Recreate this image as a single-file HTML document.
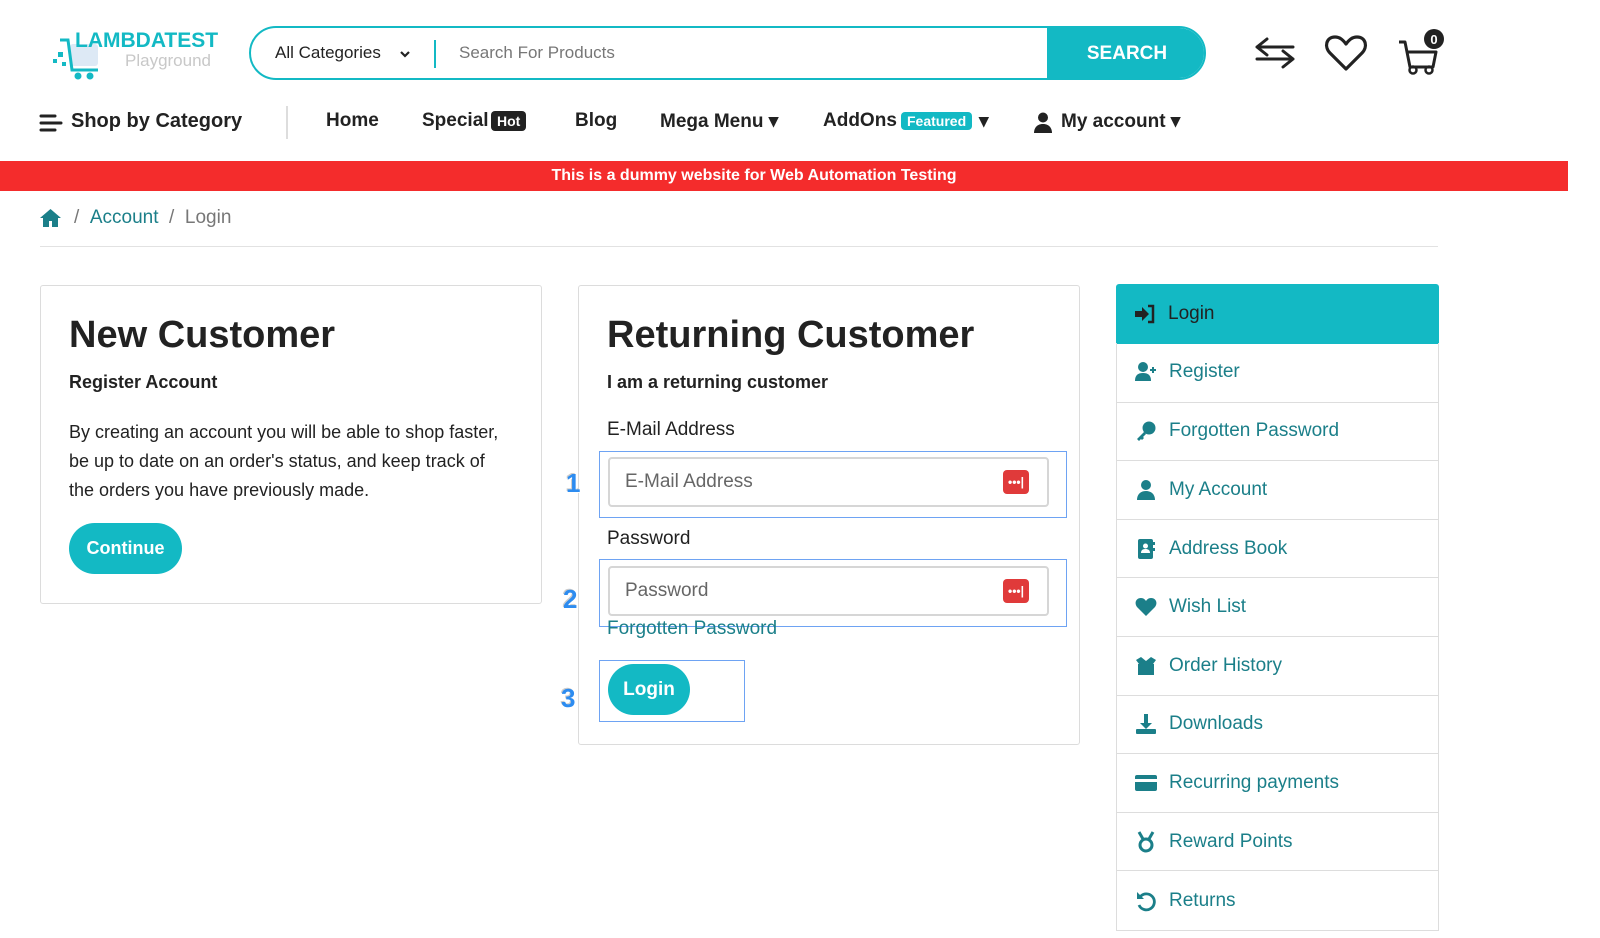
<!DOCTYPE html>
<html><head><meta charset="utf-8"><style>
*{box-sizing:border-box;margin:0;padding:0}
body{width:1600px;height:938px;overflow:hidden;background:#fff;font-family:"Liberation Sans",sans-serif;color:#222;position:relative}
.a{position:absolute}
.teal{color:#1b7f89}
.box{position:absolute;border:1px solid #dcdcdc;border-radius:3px;background:#fff}
.nav{position:absolute;top:110px;font-size:19px;font-weight:bold;color:#222}
.side{position:absolute;left:1116px;width:323px;border:1px solid #ddd;border-top:none}
.row{height:58.6px;border-top:1px solid #ddd;display:flex;align-items:center;padding-left:18px;font-size:19px;color:#1b7f89}
.row svg{width:22px;height:22px;margin-right:12px;fill:#1b7f89}
.inp{position:absolute;left:608px;width:441px;height:50px;border:2px solid #d6d6d6;border-radius:4px;font-size:19px;color:#666;padding:12px 15px}
.dots{position:absolute;right:18px;top:11px;width:26px;height:24px;background:#e03a3a;border-radius:4px;color:#fff;font-size:12px;line-height:24px;text-align:center;font-weight:bold}
.hl{position:absolute;border:1.5px solid #6ea3f3}
.num{position:absolute;font-size:26px;font-weight:bold;color:#2d8cf0;text-shadow:1px 1px 0 #fff,-1px -1px 0 #ccc}
</style></head><body>
<svg class="a" style="left:50px;top:28px" width="60" height="55" viewBox="0 0 60 55">
<rect x="20" y="16" width="28" height="22" rx="3" fill="#dde9f5"/>
<path d="M10 12h8l4 30h26" fill="none" stroke="#13b9c4" stroke-width="3"/>
<circle cx="28" cy="48" r="3.5" fill="#13b9c4"/><circle cx="40" cy="48" r="3.5" fill="#13b9c4"/>
<rect x="8" y="24" width="5" height="5" fill="#13b9c4"/><rect x="3" y="31" width="4" height="4" fill="#13b9c4"/><rect x="12" y="34" width="4" height="4" fill="#13b9c4"/>
</svg>
<div class="a" style="left:75px;top:29px;font-size:21px;font-weight:bold;color:#13b9c4">LAMBDATEST</div>
<div class="a" style="left:125px;top:51px;font-size:17px;color:#c8c8c8">Playground</div>
<div class="a" style="left:249px;top:26px;width:957px;height:54px;border:2px solid #13b9c4;border-radius:27px;overflow:hidden">
<div class="a" style="left:24px;top:15px;font-size:17px;color:#222">All Categories</div>
<svg class="a" style="left:148px;top:21px" width="12" height="10" viewBox="0 0 12 10"><path d="M2 3l4 4 4-4" fill="none" stroke="#222" stroke-width="2.2"/></svg>
<div class="a" style="left:183px;top:12px;width:2px;height:28px;background:#13b9c4"></div>
<div class="a" style="left:208px;top:15px;font-size:17px;color:#777">Search For Products</div>
<div class="a" style="left:796px;top:0;width:160px;height:52px;background:#13b9c4;color:#fff;font-weight:bold;font-size:19px;line-height:52px;text-align:center">SEARCH</div>
</div>
<svg class="a" style="left:1253px;top:35px" width="44" height="36" viewBox="0 0 44 36"><path d="M14 4L4 12l10 8M4 12h36M30 16l10 8-10 8M40 24H4" fill="none" stroke="#222" stroke-width="3" stroke-linecap="round" stroke-linejoin="round"/></svg>
<svg class="a" style="left:1324px;top:33px" width="44" height="40" viewBox="0 0 44 40"><path d="M22 36L6 20C0 14 2 4 11 4c5 0 8 3 11 7 3-4 6-7 11-7 9 0 11 10 5 16z" fill="none" stroke="#222" stroke-width="3.2" stroke-linejoin="round"/></svg>
<svg class="a" style="left:1396px;top:28px" width="50" height="48" viewBox="0 0 50 48"><path d="M3 14h6l5 25h23l3-15H12" fill="none" stroke="#222" stroke-width="3" stroke-linejoin="round"/><circle cx="17" cy="42" r="3.5" fill="none" stroke="#222" stroke-width="2.5"/><circle cx="33" cy="42" r="3.5" fill="none" stroke="#222" stroke-width="2.5"/><circle cx="38" cy="11" r="10" fill="#222"/><text x="38" y="16" font-size="13" font-weight="bold" fill="#fff" text-anchor="middle" font-family="Liberation Sans">0</text></svg>
<svg class="a" style="left:39px;top:113px" width="24" height="20" viewBox="0 0 24 20"><path d="M2 3h14M2 10h20M2 17h14" stroke="#222" stroke-width="3" stroke-linecap="round"/></svg>
<div class="nav" style="left:71px;font-size:20px">Shop by Category</div>
<div class="a" style="left:286px;top:106px;width:2px;height:33px;background:#ddd"></div>
<div class="nav" style="left:326px">Home</div>
<div class="nav" style="left:422px">Special</div>
<div class="a" style="left:491px;top:111px;background:#222;color:#fff;font-size:14px;font-weight:bold;padding:2px 6px;border-radius:4px">Hot</div>
<div class="nav" style="left:575px">Blog</div>
<div class="nav" style="left:660px">Mega Menu ▾</div>
<div class="nav" style="left:823px">AddOns</div>
<div class="a" style="left:901px;top:112px;background:#13b9c4;color:#fff;font-size:14px;font-weight:bold;padding:1px 6px;border-radius:4px">Featured</div>
<div class="nav" style="left:979px">▾</div>
<svg class="a" style="left:1034px;top:112px" width="18" height="21" viewBox="0 0 18 21"><circle cx="9" cy="5.5" r="5" fill="#222"/><path d="M0 21c0-6 4-9 9-9s9 3 9 9z" fill="#222"/></svg>
<div class="nav" style="left:1061px">My account ▾</div>
<div class="a" style="left:0;top:161px;width:1568px;height:30px;background:#f42c2c;color:#fff;font-weight:bold;font-size:16px;text-align:center;line-height:30px;padding-right:60px">This is a dummy website for Web Automation Testing</div>
<svg class="a" style="left:39px;top:208px" width="23" height="20" viewBox="0 0 23 20"><path d="M11.5 1L1 10h3v9h6v-6h3v6h6v-9h3z" fill="#1b7f89"/></svg>
<div class="a" style="left:74px;top:207px;font-size:19px;color:#777">/ <span class="teal">&nbsp;Account</span> &nbsp;/ &nbsp;Login</div>
<div class="a" style="left:40px;top:246px;width:1398px;height:1px;background:#e2e2e2"></div>
<div class="box" style="left:40px;top:285px;width:502px;height:319px"></div>
<div class="a" style="left:69px;top:314px;font-size:38px;font-weight:bold;color:#222">New Customer</div>
<div class="a" style="left:69px;top:372px;font-size:18px;font-weight:bold">Register Account</div>
<div class="a" style="left:69px;top:418px;width:440px;font-size:18px;line-height:29px">By creating an account you will be able to shop faster, be up to date on an order's status, and keep track of the orders you have previously made.</div>
<div class="a" style="left:69px;top:523px;width:113px;height:51px;background:#13b9c4;border-radius:26px;color:#fff;font-weight:bold;font-size:18px;line-height:51px;text-align:center">Continue</div>
<div class="box" style="left:578px;top:285px;width:502px;height:460px"></div>
<div class="a" style="left:607px;top:314px;font-size:38px;font-weight:bold;color:#222">Returning Customer</div>
<div class="a" style="left:607px;top:372px;font-size:18px;font-weight:bold">I am a returning customer</div>
<div class="a" style="left:607px;top:419px;font-size:19px">E-Mail Address</div>
<div class="hl" style="left:599px;top:451px;width:468px;height:67px"></div>
<div class="inp" style="top:457px">E-Mail Address<div class="dots">•••|</div></div>
<div class="a" style="left:607px;top:528px;font-size:19px">Password</div>
<div class="hl" style="left:599px;top:559px;width:468px;height:68px"></div>
<div class="inp" style="top:566px">Password<div class="dots">•••|</div></div>
<div class="a teal" style="left:607px;top:618px;font-size:19px">Forgotten Password</div>
<div class="hl" style="left:599px;top:660px;width:146px;height:62px"></div>
<div class="a" style="left:608px;top:664px;width:82px;height:51px;background:#13b9c4;border-radius:26px;color:#fff;font-weight:bold;font-size:19px;line-height:51px;text-align:center">Login</div>
<div class="num" style="left:566px;top:468px">1</div>
<div class="num" style="left:563px;top:584px">2</div>
<div class="num" style="left:561px;top:683px">3</div>
<div class="a" style="left:1116px;top:284px;width:323px;height:60px;background:#13b9c4;border-radius:3px 3px 0 0;display:flex;align-items:center;padding-left:18px;font-size:19px;color:#222">
<svg width="22" height="20" viewBox="0 0 22 20" style="margin-right:12px"><path d="M1 7h7V3l7 7-7 7v-4H1z" fill="#222"/><path d="M14 2h5v16h-5" fill="none" stroke="#222" stroke-width="2.5"/></svg>Login</div>
<div class="side" style="top:343px">
<div class="row" style="border-top:none"><svg viewBox="0 0 22 22"><circle cx="8" cy="6" r="5"/><path d="M0 20c0-6 3-8 8-8s8 2 8 8z"/><path d="M15 9h6M18 6v6" stroke="#1b7f89" stroke-width="2"/></svg>Register</div>
<div class="row"><svg viewBox="0 0 22 22"><circle cx="14" cy="8" r="6.5"/><path d="M9 12l-7 7 2 2 2-2 1 1 2-2-1-1 3-3z"/></svg>Forgotten Password</div>
<div class="row"><svg viewBox="0 0 22 22"><circle cx="11" cy="6" r="5"/><path d="M2 21c0-6 4-9 9-9s9 3 9 9z"/></svg>My Account</div>
<div class="row"><svg viewBox="0 0 22 22"><rect x="3" y="1" width="15" height="20" rx="2"/><circle cx="10.5" cy="8" r="2.5" fill="#fff"/><path d="M6 15c0-3 2-4 4.5-4s4.5 1 4.5 4z" fill="#fff"/><rect x="18" y="4" width="2" height="3"/><rect x="18" y="10" width="2" height="3"/></svg>Address Book</div>
<div class="row"><svg viewBox="0 0 22 22"><path d="M11 20L2 11C-1 7 1 2 6 2c2.5 0 4 1.5 5 3 1-1.5 2.5-3 5-3 5 0 7 5 4 9z"/></svg>Wish List</div>
<div class="row"><svg viewBox="0 0 22 22"><path d="M3 9h16v11H3z"/><path d="M1 5l5-3 5 4 5-4 5 3-3 4H4z"/></svg>Order History</div>
<div class="row"><svg viewBox="0 0 22 22"><path d="M9 1h4v9h4l-6 6-6-6h4z"/><rect x="1" y="16" width="20" height="5" rx="1"/></svg>Downloads</div>
<div class="row"><svg viewBox="0 0 22 22"><rect x="0" y="3" width="22" height="16" rx="2"/><rect x="0" y="7" width="22" height="3" fill="#fff"/></svg>Recurring payments</div>
<div class="row"><svg viewBox="0 0 22 22"><path d="M4 1l4 7M18 1l-4 7" stroke="#1b7f89" stroke-width="3"/><circle cx="11" cy="14" r="6" fill="none" stroke="#1b7f89" stroke-width="3"/></svg>Reward Points</div>
<div class="row" style="height:60px"><svg viewBox="0 0 22 22"><path d="M5 7a8 8 0 1 1-1 8" fill="none" stroke="#1b7f89" stroke-width="2.8"/><path d="M2 2v7h7z"/></svg>Returns</div>
</div>
</body></html>
